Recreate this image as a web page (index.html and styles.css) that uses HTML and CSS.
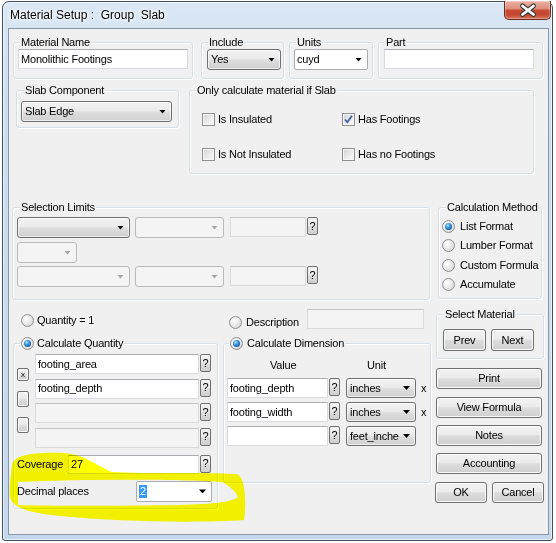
FILE: index.html
```html
<!DOCTYPE html>
<html>
<head>
<meta charset="utf-8">
<title>Material Setup</title>
<link rel="stylesheet" href="styles.css">
</head>
<body>
<div class="window">
  <div class="titlebar">
    <div class="title">Material Setup :&nbsp; Group&nbsp; Slab</div>
    <div class="close">
      <svg width="47" height="18" viewBox="0 0 47 18">
        <path d="M17.5 5 L28.5 13.5 M28.5 5 L17.5 13.5" stroke="#3c3c3c" stroke-width="5" stroke-linecap="round"/>
        <path d="M17.5 5 L28.5 13.5 M28.5 5 L17.5 13.5" stroke="#ffffff" stroke-width="2.8" stroke-linecap="round"/>
      </svg>
    </div>
  </div>
  <div class="client">
    <div class="row1">
      <div class="gb g-name"><div class="lg lg6">Material Name</div><div class="tb name-tb">Monolithic Footings</div></div>
      <div class="gb g-inc"><div class="lg lg6">Include</div><div class="cb inc-cb"><span class="t">Yes</span><i class="ar"></i></div></div>
      <div class="gb g-units"><div class="lg lg6">Units</div><div class="cb edit units-cb"><span class="t">cuyd</span><i class="ar"></i></div></div>
      <div class="gb g-part"><div class="lg lg6">Part</div><div class="tb part-tb"></div></div>
    </div>

    <div class="row2">
      <div class="gb g-slab"><div class="lg lg7">Slab Component</div><div class="cb slab-cb"><span class="t">Slab Edge</span><i class="ar"></i></div></div>
      <div class="gb g-only"><div class="lg lg6">Only calculate material if Slab</div>
        <div class="ckgrid">
          <div class="ci"><span class="ck"></span><span class="cl">Is Insulated</span></div>
          <div class="ci"><span class="ck"><svg width="11" height="11" viewBox="0 0 11 11"><path d="M2 5.5 L4.3 8.2 L9 1.8" fill="none" stroke="#4a63a8" stroke-width="1.9"/></svg></span><span class="cl">Has Footings</span></div>
          <div class="ci"><span class="ck"></span><span class="cl">Is Not Insulated</span></div>
          <div class="ci"><span class="ck"></span><span class="cl">Has no Footings</span></div>
        </div>
      </div>
    </div>

    <div class="row3">
      <div class="gb g-sel"><div class="lg lg7">Selection Limits</div>
        <div class="slrows">
          <div class="slrow">
            <div class="cb sl-a"><span class="t"></span><i class="ar"></i></div>
            <div class="cb dis sl-b"><span class="t"></span><i class="ar"></i></div>
            <div class="tb dis sl-c"></div>
            <div class="qb">?</div>
          </div>
          <div class="slrow r2">
            <div class="cb dis sl-s"><span class="t"></span><i class="ar"></i></div>
          </div>
          <div class="slrow r3">
            <div class="cb dis sl-a"><span class="t"></span><i class="ar"></i></div>
            <div class="cb dis sl-b"><span class="t"></span><i class="ar"></i></div>
            <div class="tb dis sl-c"></div>
            <div class="qb">?</div>
          </div>
        </div>
      </div>
      <div class="gb g-calc"><div class="lg lg7">Calculation Method</div>
        <div class="rlist">
          <div class="ri"><span class="rd on"></span><span class="rl">List Format</span></div>
          <div class="ri"><span class="rd"></span><span class="rl">Lumber Format</span></div>
          <div class="ri"><span class="rd"></span><span class="rl">Custom Formula</span></div>
          <div class="ri"><span class="rd"></span><span class="rl">Accumulate</span></div>
        </div>
      </div>
    </div>

    <div class="row4">
      <div class="colq">
        <div class="qrow"><span class="rd"></span><span class="rlab">Quantity = 1</span></div>
        <div class="gb g-cq">
          <div class="lg lg6 rleg"><span class="rd on"></span><span class="rlab">Calculate Quantity</span></div>
          <div class="qtop">
            <div class="sbcol">
              <div class="sb sb1">x</div>
              <div class="sb sb2"></div>
              <div class="sb sb2"></div>
            </div>
            <div class="qinputs">
              <div class="qi"><div class="tb qtb">footing_area</div><div class="qb">?</div></div>
              <div class="qi"><div class="tb qtb">footing_depth</div><div class="qb">?</div></div>
              <div class="qi"><div class="tb dis qtb"></div><div class="qb">?</div></div>
              <div class="qi"><div class="tb dis qtb"></div><div class="qb">?</div></div>
            </div>
          </div>
          <div class="covrow"><span class="covlab">Coverage</span><div class="tb covtb">27</div><div class="qb">?</div></div>
          <div class="decrow"><span class="declab">Decimal places</span><div class="cb edit deccb"><span class="t"><span class="hl">2</span></span><i class="ar"></i></div></div>
        </div>
      </div>

      <div class="cold">
        <div class="descrow"><span class="rd"></span><span class="desclab">Description</span><div class="tb dis desctb"></div></div>
        <div class="gb g-cd">
          <div class="lg lg5 rleg"><span class="rd on"></span><span class="rlab2">Calculate Dimension</span></div>
          <div class="dhead"><span class="hv">Value</span><span>Unit</span></div>
          <div class="drow"><div class="tb dtb">footing_depth</div><div class="qb">?</div><div class="cb dcb"><span class="t">inches</span><i class="ar"></i></div><span class="dx">x</span></div>
          <div class="drow"><div class="tb dtb">footing_width</div><div class="qb">?</div><div class="cb dcb"><span class="t">inches</span><i class="ar"></i></div><span class="dx">x</span></div>
          <div class="drow"><div class="tb dtb"></div><div class="qb">?</div><div class="cb dcb"><span class="t">feet_inche</span><i class="ar"></i></div></div>
        </div>
      </div>

      <div class="rcol">
        <div class="gb g-sm"><div class="lg lg7">Select Material</div>
          <div class="pnrow"><div class="btn pn">Prev</div><div class="btn pn next">Next</div></div>
        </div>
        <div class="btn wide b-print">Print</div>
        <div class="btn wide b-view">View Formula</div>
        <div class="btn wide b-notes">Notes</div>
        <div class="btn wide b-acc">Accounting</div>
        <div class="okrow"><div class="btn ok">OK</div><div class="btn cancel">Cancel</div></div>
      </div>
    </div>

    <svg class="marker" width="556" height="543" viewBox="0 0 556 543">
      <path fill="#ffff00" fill-rule="evenodd" d="M12 466 C12 456 30 452 62 453 C85 454 95 465 112 472 C150 474 200 472 236 474 C247 476 246 510 244 520 C200 523 120 522 60 516 C30 513 12 508 10 497 C9 486 11 474 12 466 Z M18 482 C80 479 180 479 222 482 C230 486 236 492 238 497 C232 502 215 504 180 505 C120 506 50 506 18 505 Z"/>
    </svg>
  </div>
</div>
</body>
</html>
```

FILE: styles.css
```css
* { box-sizing: border-box; }

body {
  margin: 0;
  background: #ffffff;
  font-family: "Liberation Sans", Arial, sans-serif;
  font-size: 11px;
  line-height: 13px;
  letter-spacing: -0.2px;
  color: #000;
}

/* ---------- window frame ---------- */
.window {
  position: relative;
  margin: 1px 0 0 2px;
  width: 551px;
  height: 540px;
  border: 1px solid #3f4f61;
  border-radius: 7px 7px 3px 3px;
  background: linear-gradient(180deg, #dae7f5 0%, #cddeef 20%, #c4d7ec 100%);
  box-shadow: inset 0 0 0 1px rgba(255,255,255,0.6);
}

.titlebar {
  height: 26px;
  display: flex;
  justify-content: space-between;
  align-items: flex-start;
}

.title {
  margin: 6px 0 0 7px;
  font-size: 12px;
  line-height: 15px;
  letter-spacing: 0;
  text-shadow: 0 0 5px #fff, 0 0 3px #fff, 0 0 8px #fff;
}

.close {
  width: 47px;
  height: 19px;
  margin: -1px 1px 0 0;
  border: 1px solid #6b2a1e;
  border-top: 0;
  border-radius: 0 0 5px 5px;
  background: linear-gradient(180deg, #eab1a3 0%, #de8f7c 42%, #c84a31 52%, #c5462e 75%, #d8755d 100%);
  box-shadow: inset 0 0 0 1px rgba(255,255,255,0.3);
}
.close svg { display: block; }

.client {
  position: relative;
  margin: 0 3px 0 5px;
  height: 507px;
  border: 1px solid #8897aa;
  background: #f0f0f0;
}

/* ---------- group boxes ---------- */
.gb {
  border: 1px solid #d5dfe5;
  border-radius: 3px;
  box-shadow: inset 1px 1px 0 #fff, 1px 1px 0 #fff;
}
.lg {
  width: max-content;
  height: 13px;
  margin-top: -7px;
  padding: 0 1px;
  background: #f0f0f0;
  white-space: nowrap;
}
.lg5 { margin-left: 5px; }
.lg6 { margin-left: 6px; }
.lg7 { margin-left: 7px; }

/* ---------- controls ---------- */
.tb {
  height: 20px;
  border: 1px solid #d8dbe0;
  border-top-color: #abadb3;
  background: #fff;
  padding-left: 2px;
  display: flex;
  align-items: center;
  white-space: nowrap;
  overflow: hidden;
}
.tb.dis {
  background: #f4f4f4;
  border-color: #dadada;
  border-top-color: #c4c4c4;
}

.cb {
  height: 21px;
  border: 1px solid #707070;
  border-radius: 3px;
  background: linear-gradient(180deg, #f3f3f3 0%, #ebebeb 45%, #dddddd 55%, #d0d0d0 100%);
  box-shadow: inset 0 0 0 1px rgba(255,255,255,0.65);
  display: flex;
  align-items: center;
  padding: 0 5px 0 3px;
}
.cb .t {
  flex: 1;
  overflow: hidden;
  white-space: nowrap;
}
.cb .ar {
  display: block;
  flex: none;
  width: 7px;
  height: 4px;
  margin-left: 1px;
  background: #000;
  clip-path: polygon(0 0, 100% 0, 50% 100%);
}
.cb.edit {
  background: #fff;
  border-color: #abadb3;
  border-radius: 2px;
  box-shadow: none;
  padding-left: 2px;
}
.cb.dis {
  background: #f4f4f4;
  border-color: #bababa;
  box-shadow: none;
}
.cb.dis .ar { background: #a6a6a6; }

.qb {
  width: 11px;
  height: 18px;
  margin-left: 1px;
  flex: none;
  border: 1px solid #707070;
  border-radius: 2px;
  background: linear-gradient(180deg, #f3f3f3 0%, #ebebeb 45%, #dddddd 55%, #cfcfcf 100%);
  display: flex;
  align-items: center;
  justify-content: center;
}

.btn {
  height: 21px;
  border: 1px solid #707070;
  border-radius: 3px;
  background: linear-gradient(180deg, #f3f3f3 0%, #ebebeb 46%, #dddddd 52%, #cfcfcf 100%);
  box-shadow: inset 0 0 0 1px #fbfbfb;
  display: flex;
  align-items: center;
  justify-content: center;
  white-space: nowrap;
}

.sb {
  width: 12px;
  border: 1px solid #707070;
  border-radius: 2px;
  background: linear-gradient(180deg, #f3f3f3 0%, #ebebeb 45%, #dddddd 55%, #cfcfcf 100%);
  box-shadow: inset 0 0 0 1px #fbfbfb;
  display: flex;
  align-items: center;
  justify-content: center;
  font-size: 8px;
  line-height: 8px;
}
.sb1 { height: 13px; margin-top: 18px; }
.sb2 { height: 16px; margin-top: 10px; }

.ck {
  width: 13px;
  height: 13px;
  flex: none;
  border: 1px solid #8e8f8f;
  background: linear-gradient(135deg, #cdd0d5 0%, #eeeeee 60%, #fbfbfb 100%);
  box-shadow: inset 0 0 0 1px #f6f6f6;
  display: flex;
  align-items: center;
  justify-content: center;
}
.ck svg { display: block; }

.rd {
  width: 13px;
  height: 13px;
  flex: none;
  border-radius: 50%;
  border: 1px solid #8e8f8f;
  background: radial-gradient(circle at 35% 35%, #ffffff 0%, #eaeaea 45%, #cfcfcf 100%);
  display: flex;
  align-items: center;
  justify-content: center;
}
.rd.on::after {
  content: "";
  display: block;
  width: 7px;
  height: 7px;
  border-radius: 50%;
  background: radial-gradient(circle at 40% 35%, #b8e4ff 0%, #3a9be0 35%, #145aa0 75%, #0b3a70 100%);
}

/* ---------- row 1 ---------- */
.row1 {
  display: flex;
  align-items: flex-start;
  margin-top: 13px;
}
.g-name { margin-left: 4px; width: 180px; height: 37px; }
.name-tb { margin-left: 4px; width: 170px; }
.g-inc { margin-left: 8px; width: 83px; height: 37px; }
.inc-cb { margin-left: 5px; width: 74px; }
.g-units { margin-left: 5px; width: 84px; height: 37px; }
.units-cb { margin-left: 4px; width: 74px; }
.g-part { margin-left: 5px; width: 165px; height: 37px; }
.part-tb { margin-left: 5px; width: 150px; }

/* ---------- row 2 ---------- */
.row2 {
  display: flex;
  align-items: flex-start;
  margin-top: 11px;
}
.g-slab { margin-left: 7px; width: 163px; height: 38px; }
.slab-cb { margin: 4px 0 0 4px; width: 151px; padding-left: 3px; }
.g-only { margin-left: 10px; width: 345px; height: 84px; }
.ckgrid {
  display: grid;
  grid-template-columns: 140px auto;
  row-gap: 22px;
  margin: 16px 0 0 12px;
}
.ci { display: flex; align-items: center; height: 13px; white-space: nowrap; }
.cl { margin-left: 3px; }

/* ---------- row 3 ---------- */
.row3 {
  display: flex;
  align-items: flex-start;
  margin-top: 33px;
}
.g-sel { margin-left: 3px; width: 418px; height: 93px; }
.slrows { margin: 3px 0 0 4px; }
.slrow { display: flex; align-items: flex-start; }
.slrow.r2 { margin-top: 4px; }
.slrow.r3 { margin-top: 3px; }
.sl-a { width: 113px; }
.sl-b { width: 89px; margin-left: 5px; }
.sl-c { width: 76px; margin-left: 6px; }
.sl-s { width: 60px; }

.g-calc { margin-left: 8px; width: 104px; height: 92px; }
.rlist { margin: 6px 0 0 3px; }
.ri { display: flex; align-items: center; height: 13px; margin-bottom: 6.4px; white-space: nowrap; }
.rl { margin-left: 5px; }

/* ---------- row 4 ---------- */
.row4 {
  display: flex;
  align-items: flex-start;
}
.colq { margin-left: 4px; width: 205px; }
.qrow {
  display: flex;
  align-items: center;
  height: 13px;
  margin-top: 14px;
  padding-left: 8px;
}
.rlab { margin-left: 3px; white-space: nowrap; }
.rlab2 { margin-left: 4px; white-space: nowrap; }
.rleg { display: flex; align-items: center; }

.g-cq { margin-top: 16px; height: 166px; }
.qtop { display: flex; align-items: flex-start; margin-left: 3px; }
.sbcol { width: 12px; display: flex; flex-direction: column; }
.qinputs { margin-left: 6px; padding-top: 4px; }
.qi { display: flex; align-items: flex-start; }
.qi + .qi { margin-top: 4.67px; }
.qtb { width: 164px; }

.covrow { display: flex; align-items: center; margin: 7px 0 0 3px; }
.covlab { width: 51px; }
.covtb { width: 131px; height: 19px; }
.covrow .qb { align-self: flex-start; }

.decrow { display: flex; align-items: center; margin: 7px 0 0 3px; }
.declab { width: 119px; white-space: nowrap; }
.deccb { width: 76px; }
.hl { background: #3399ff; color: #fff; padding: 1px 1px 2px 1px; }

.cold { margin-left: 5px; width: 208px; }
.descrow {
  display: flex;
  align-items: flex-start;
  padding-left: 6px;
}
.descrow .rd { margin-top: 16px; }
.desclab { margin: 16px 0 0 4px; width: 61px; }
.desctb { margin-top: 9px; width: 117px; }

.g-cd { margin-top: 14px; height: 140px; }
.dhead { display: flex; margin-top: 9px; padding-left: 46px; height: 13px; }
.hv { width: 97px; }
.drow { display: flex; align-items: flex-start; margin-top: 4px; padding-left: 3px; }
.dhead + .drow { margin-top: 6px; }
.dtb { width: 101px; }
.dcb { width: 70px; margin-left: 6px; height: 20px; padding-right: 5px; }
.dx { margin: 4px 0 0 5px; }

.rcol { margin-left: 5px; width: 108px; }
.g-sm { margin-top: 14px; width: 108px; height: 45px; }
.pnrow { display: flex; margin: 8px 0 0 6px; }
.pn { width: 43px; height: 22px; }
.pn.next { margin-left: 5px; }
.wide { width: 106px; }
.b-print { margin-top: 9px; }
.b-view { margin-top: 8px; }
.b-notes { margin-top: 7px; }
.b-acc { margin-top: 7px; }
.okrow { display: flex; margin-top: 8px; }
.ok { width: 52px; margin-left: -1px; }
.cancel { width: 52px; margin-left: 5px; }

/* ---------- highlighter annotation ---------- */
.marker {
  position: absolute;
  left: -9px;
  top: -29px;
  pointer-events: none;
  mix-blend-mode: multiply;
}
```
